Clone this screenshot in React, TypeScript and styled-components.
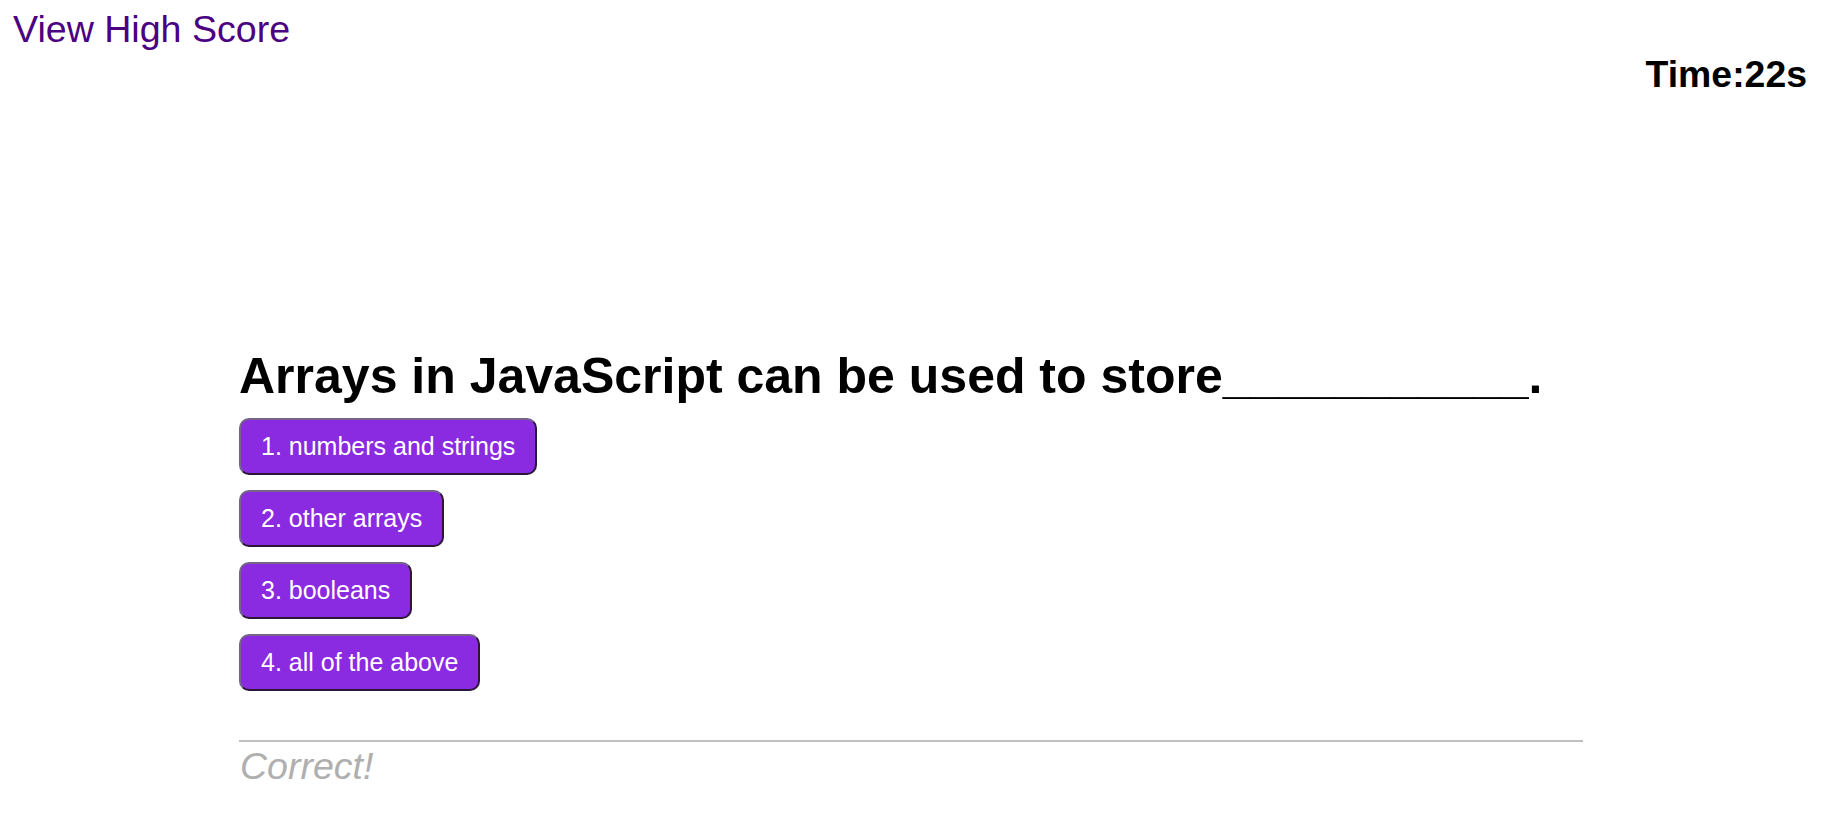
import styled, { createGlobalStyle } from "styled-components";

const GlobalStyle = createGlobalStyle`
  body {
    margin: 8px;
    background: #ffffff;
    font-family: "Liberation Sans", Arial, sans-serif;
  }
`;

const choices = ["1. numbers and strings", "2. other arrays", "3. booleans", "4. all of the above"];

export default function App() {
  return (
    <>
      <GlobalStyle />
      <S.Header>
        <S.HighScoreLink href="#">View High Score</S.HighScoreLink>
        <S.Timer>Time:22s</S.Timer>
      </S.Header>
      <S.Quiz>
        <S.Question>Arrays in JavaScript can be used to store___________.</S.Question>
        <S.Choices>
          {choices.map((choice) => (
            <S.ChoiceButton key={choice}>{choice}</S.ChoiceButton>
          ))}
        </S.Choices>
        <S.Feedback>Correct!</S.Feedback>
      </S.Quiz>
    </>
  );
}

const S = {
  Header: styled.header`
    display: flex;
    flex-direction: column;
    padding: 0 13px 0 5px;
  `,
  HighScoreLink: styled.a`
    align-self: flex-start;
    font-size: 37.6px;
    color: #4b0082;
    text-decoration: none;
  `,
  Timer: styled.div`
    align-self: flex-end;
    margin-top: 2px;
    font-size: 37.4px;
    font-weight: bold;
    color: #000000;
  `,
  Quiz: styled.main`
    width: 1344px;
    margin: 251px 0 0 231px;
  `,
  Question: styled.h1`
    margin: 0;
    font-size: 50px;
    font-weight: bold;
    color: #000000;
    white-space: nowrap;
  `,
  Choices: styled.div`
    display: flex;
    flex-direction: column;
    align-items: flex-start;
    gap: 15px;
    margin-top: 13px;
  `,
  ChoiceButton: styled.button`
    padding: 12px 20px;
    font-family: "Liberation Sans", Arial, sans-serif;
    font-size: 25px;
    color: #ffffff;
    background: #8a2be2;
    border: 2px solid;
    border-color: #75648a #2a1838 #2a1838 #75648a;
    border-radius: 10px;
    cursor: pointer;
  `,
  Feedback: styled.div`
    margin-top: 49px;
    padding: 3px 0 0 1px;
    border-top: 2px solid #c0c0c0;
    font-size: 37.5px;
    font-style: italic;
    color: #afafaf;
  `,
};
